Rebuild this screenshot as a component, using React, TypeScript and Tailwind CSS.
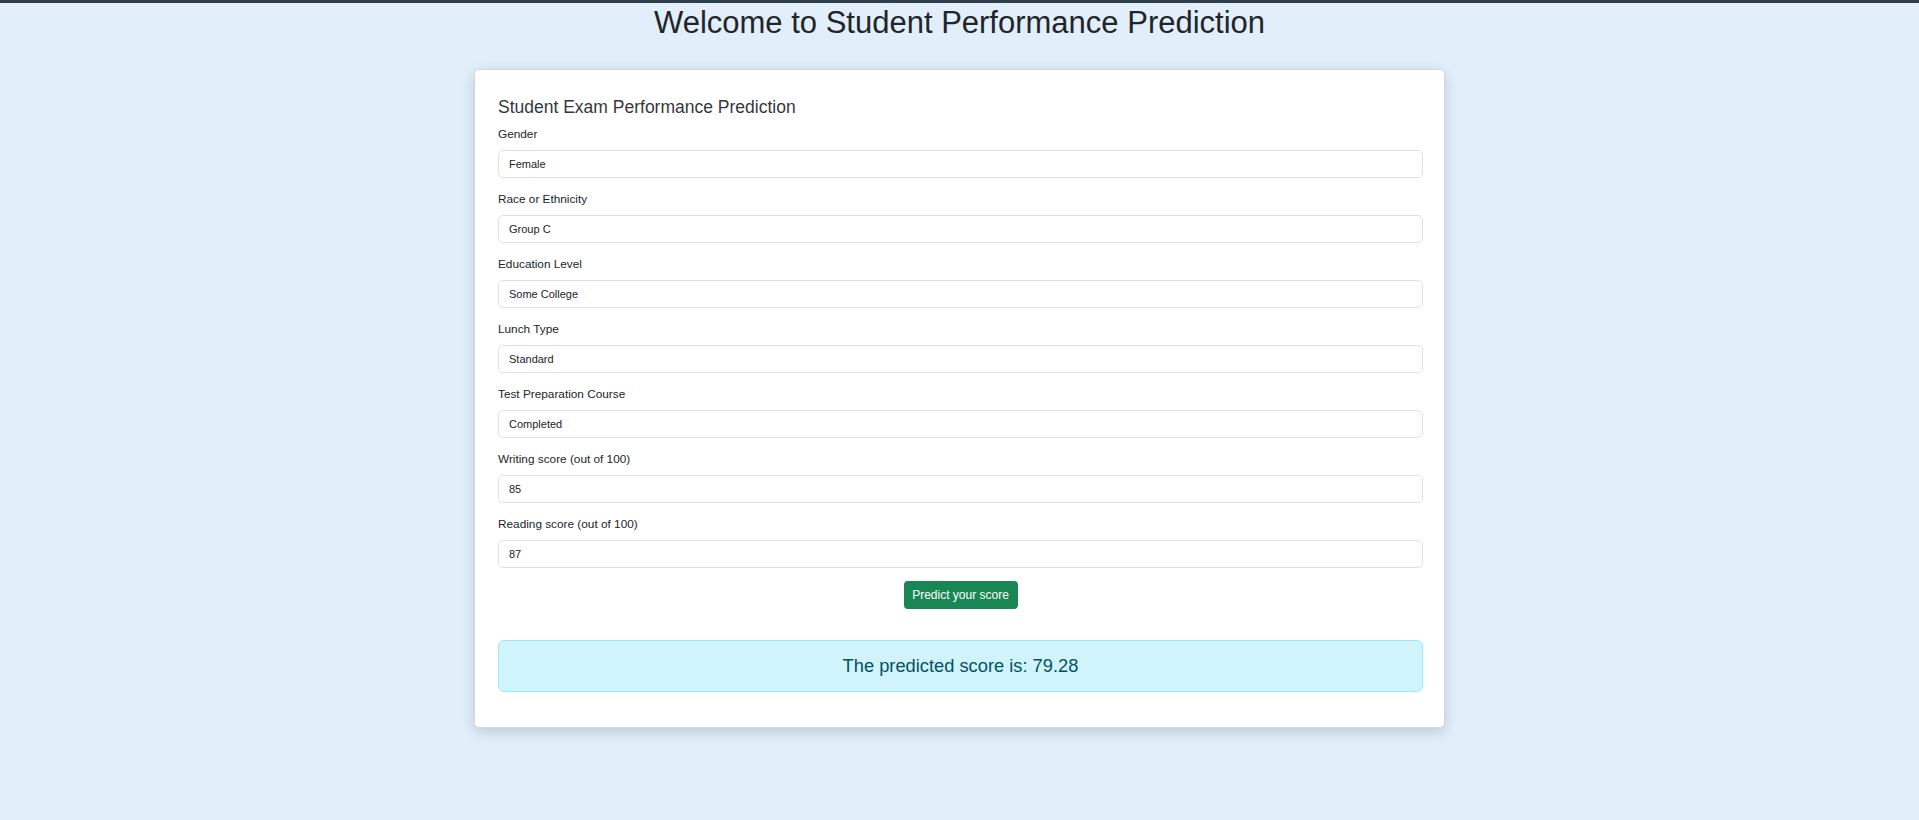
const fields = [
  { label: "Gender", value: "Female" },
  { label: "Race or Ethnicity", value: "Group C" },
  { label: "Education Level", value: "Some College" },
  { label: "Lunch Type", value: "Standard" },
  { label: "Test Preparation Course", value: "Completed" },
  { label: "Writing score (out of 100)", value: "85" },
  { label: "Reading score (out of 100)", value: "87" },
];

export default function App() {
  return (
    <main className="min-h-screen bg-[#e2effb] font-['Liberation_Sans',Arial,sans-serif] text-[#212529]">
      <div className="h-[3px] bg-[#2f3e4b]" />

      <h1 className="mt-[1px] text-center text-[31px] leading-[37px] font-normal text-[#212529]">
        Welcome to Student Performance Prediction
      </h1>

      <div className="mx-auto mt-[28px] w-[971px] rounded-[5px] border border-[#d4d7da] bg-white pl-[23px] pr-[21px] pt-[24px] pb-[35px] shadow-[0_4px_14px_rgba(0,0,0,0.16)]">
        <h2 className="mb-[5px] text-[17.5px] leading-[27px] font-normal text-[#33383d]">
          Student Exam Performance Prediction
        </h2>

        <form className="flex flex-col" onSubmit={e => e.preventDefault()}>
          {fields.map(f => (
            <div key={f.label} className="mb-[13px] flex flex-col">
              <label className="mb-[7px] text-[11.8px] leading-[17px] text-[#212529]">
                {f.label}
              </label>
              <div className="flex h-[28px] items-center rounded-[5px] border border-[#dee2e6] bg-white px-[10px] text-[11px] text-[#212529]">
                {f.value}
              </div>
            </div>
          ))}

          <div className="flex justify-center">
            <button
              type="submit"
              className="h-[28px] w-[114px] rounded-[4px] bg-[#198754] text-[12px] text-white"
            >
              Predict your score
            </button>
          </div>
        </form>

        <div className="mt-[31px] flex h-[52px] items-center justify-center rounded-[6px] border border-[#9eeaf9] bg-[#cff4fc]">
          <span className="text-[18.3px] font-medium text-[#055160]">
            The predicted score is: 79.28
          </span>
        </div>
      </div>
    </main>
  );
}
